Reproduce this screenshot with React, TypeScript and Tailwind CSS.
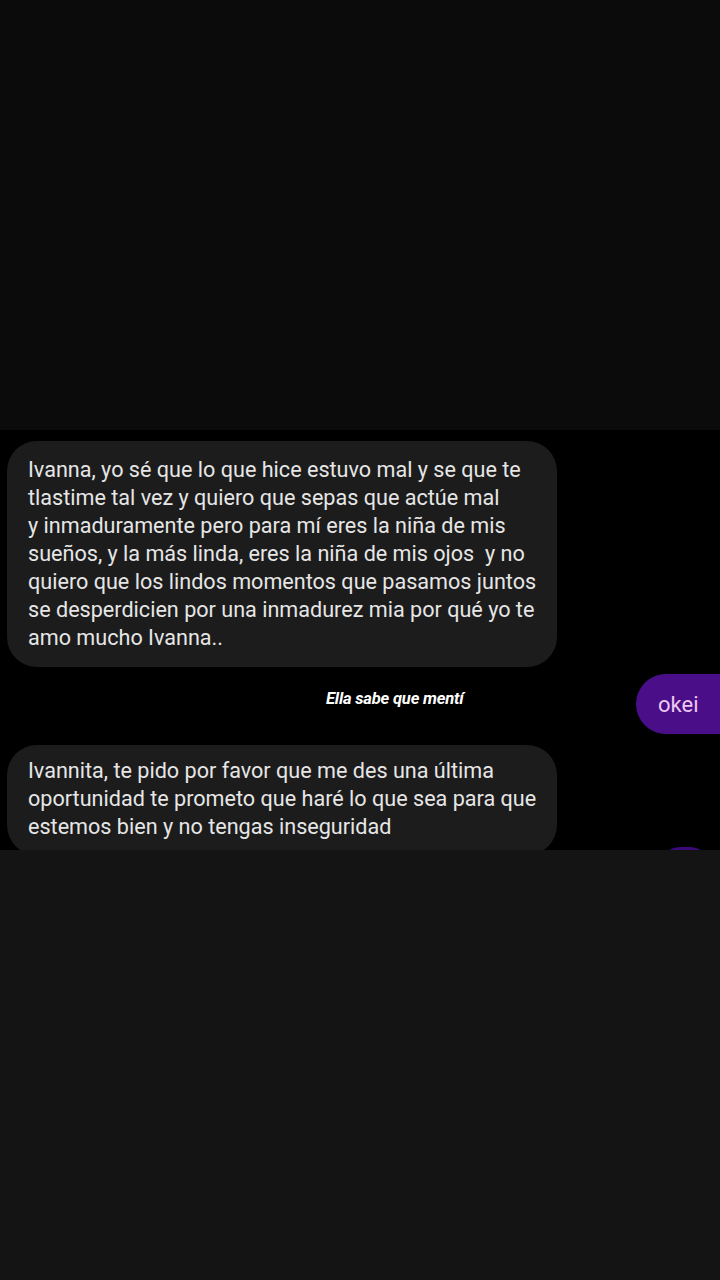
import React from "react";

export default function App() {
  return (
    <div className="w-[720px] h-[1280px] flex flex-col bg-black" style={{ fontFamily: "Roboto, 'Noto Sans', sans-serif" }}>
      <div className="h-[430px] bg-[#0b0b0b]" />
      <div className="h-[420px] bg-black overflow-hidden flex flex-col pt-[11px]">
        <div className="ml-[7px] w-[550px] rounded-[30px] bg-[#1c1c1c] pl-[21px] pr-[6px] pt-[15px] pb-[15px] text-[21.6px] leading-[28px] text-[#e6e6e6] whitespace-nowrap">
          <div>Ivanna, yo sé que lo que hice estuvo mal y se que te</div>
          <div>tlastime tal vez y quiero que sepas que actúe mal</div>
          <div>y inmaduramente pero para mí eres la niña de mis</div>
          <div>sueños, y la más linda, eres la niña de mis ojos&nbsp; y no</div>
          <div>quiero que los lindos momentos que pasamos juntos</div>
          <div>se desperdicien por una inmadurez mia por qué yo te</div>
          <div>amo mucho Ivanna..</div>
        </div>
        <div className="flex items-center mt-[7px] h-[60px]">
          <div className="flex-1 flex pl-[326px] -mt-[10px]">
            <span className="text-white italic font-bold text-[16.6px] tracking-[-0.2px]" style={{ fontFamily: "Roboto, sans-serif" }}>Ella sabe que mentí</span>
          </div>
          <div className="w-[95px] h-[60px] rounded-l-[30px] bg-[#4a0e88] flex items-center pl-[22px] text-[22px] text-[#ecc8f2] -mr-[11px]">
            okei
          </div>
        </div>
        <div className="flex items-start mt-[11px]">
          <div className="ml-[7px] w-[550px] rounded-[30px] bg-[#1c1c1c] pl-[21px] pr-[6px] pt-[12px] pb-[14px] text-[21.6px] leading-[28px] text-[#e6e6e6] whitespace-nowrap">
            <div>Ivannita, te pido por favor que me des una última</div>
            <div>oportunidad te prometo que haré lo que sea para que</div>
            <div>estemos bien y no tengas inseguridad</div>
          </div>
          <div className="ml-auto mt-[102px] w-[50px] h-[40px] rounded-t-[20px] bg-[#3c0a78] mr-[10px]" />
        </div>
      </div>
      <div className="flex-1 bg-[#141414]" />
    </div>
  );
}
